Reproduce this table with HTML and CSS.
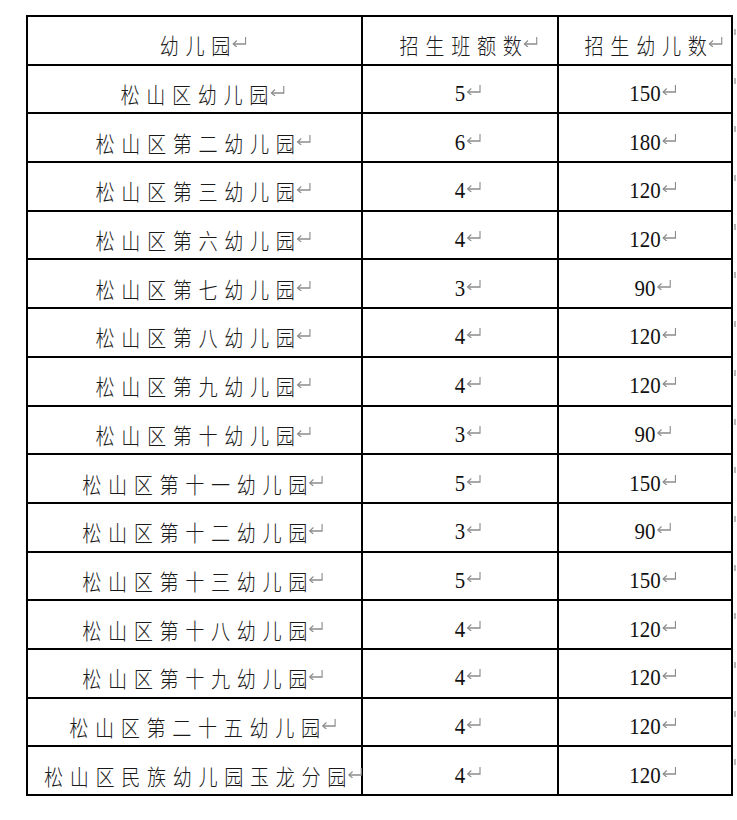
FILE: index.html
```html
<!DOCTYPE html>
<html lang="zh">
<head>
<meta charset="utf-8">
<title>松山区幼儿园招生计划</title>
<link rel="stylesheet" href="styles.css">
</head>
<body>
<div class="page">
  <table class="plan">
    <colgroup>
      <col class="c-name">
      <col class="c-class">
      <col class="c-kids">
    </colgroup>
    <tbody id="rows">
    </tbody>
  </table>
</div>
<script src="app.js"></script>
</body>
</html>
```
FILE: styles.css
```css
html, body {
  margin: 0;
  padding: 0;
  background: #ffffff;
}
.page {
  padding: 15px 0 0 26px;
}
.plan {
  border-collapse: collapse;
  table-layout: fixed;
  width: 707px;
}
.c-name { width: 335px; }
.c-class { width: 196px; }
.c-kids { width: 174px; }
.plan td {
  border: 2px solid #000;
  height: 48.7px;
  padding: 8px 0 0 0;
  box-sizing: border-box;
  vertical-align: middle;
  white-space: nowrap;
  overflow: visible;
  position: relative;
}
.plan td:last-child::after {
  content: "";
  position: absolute;
  left: calc(100% + 3px);
  top: 12px;
  width: 2px;
  height: 6px;
  background: #b8b8b8;
}
.box {
  display: flex;
  justify-content: center;
}
.txt {
  display: inline-block;
  flex: none;
  transform: scaleX(0.87);
  transform-origin: center;
  line-height: 26px;
  color: #1a1a1a;
}
.cjk {
  font-family: "Noto Sans CJK SC", "Noto Sans CJK JP", sans-serif;
  font-weight: 300;
  font-size: 22px;
  letter-spacing: 7.6px;
  margin-right: -7.6px;
}
.num {
  font-family: "Liberation Serif", "Times New Roman", serif;
  font-size: 24px;
  color: #111;
}
.mark {
  display: inline-block;
  width: 0;
  overflow: visible;
  vertical-align: baseline;
}
.mark svg {
  display: block;
  width: 18px;
  height: 11px;
}
.cjk .mark svg { transform: translate(-6.4px, -7px); }
.num .mark svg { transform: translate(1px, -6px); }
```
FILE: app.js
```js
var data = [
  ["幼儿园", "招生班额数", "招生幼儿数", true],
  ["松山区幼儿园", "5", "150"],
  ["松山区第二幼儿园", "6", "180"],
  ["松山区第三幼儿园", "4", "120"],
  ["松山区第六幼儿园", "4", "120"],
  ["松山区第七幼儿园", "3", "90"],
  ["松山区第八幼儿园", "4", "120"],
  ["松山区第九幼儿园", "4", "120"],
  ["松山区第十幼儿园", "3", "90"],
  ["松山区第十一幼儿园", "5", "150"],
  ["松山区第十二幼儿园", "3", "90"],
  ["松山区第十三幼儿园", "5", "150"],
  ["松山区第十八幼儿园", "4", "120"],
  ["松山区第十九幼儿园", "4", "120"],
  ["松山区第二十五幼儿园", "4", "120"],
  ["松山区民族幼儿园玉龙分园", "4", "120"]
];
var markSvg = '<span class="mark"><svg viewBox="0 0 18 11" fill="none" stroke="#8c8c8c" stroke-width="1.3"><path d="M16 1 V8 H2"/><path d="M6 4.5 L1.8 8 L6 11"/></svg></span>';
function cell(text, cls) {
  return '<td><div class="box"><span class="txt ' + cls + '">' + text + markSvg + '</span></div></td>';
}
var html = "";
data.forEach(function (r) {
  var header = r[3];
  html += "<tr>" + cell(r[0], "cjk") + cell(r[1], header ? "cjk" : "num") + cell(r[2], header ? "cjk" : "num") + "</tr>";
});
document.getElementById("rows").innerHTML = html;
```
